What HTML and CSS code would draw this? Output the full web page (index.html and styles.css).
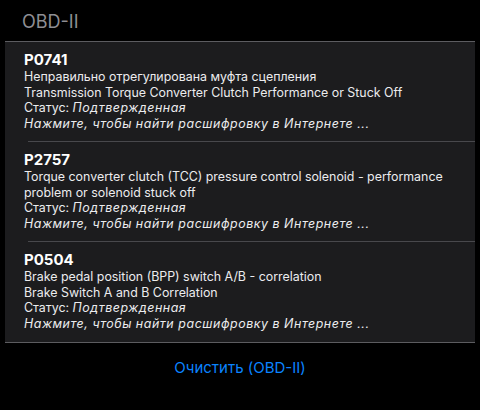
FILE: index.html
```html
<!DOCTYPE html>
<html lang="ru">
<head>
  <meta charset="UTF-8" />
  <meta name="viewport" content="width=device-width, initial-scale=1.0"/>
  <title>OBD-II</title>
  <link rel="stylesheet" href="styles.css">
</head>
<body>

  <h1 class="section-title">OBD-II</h1>

  <div class="card">
    <div class="code-row">
      <div class="code">P0741</div>
      <div class="line">Неправильно отрегулирована муфта сцепления</div>
      <div class="line">Transmission Torque Converter Clutch Performance or Stuck Off</div>
      <div class="line">Статус: <i>Подтвержденная</i></div>
      <div class="line"><i>Нажмите, чтобы найти расшифровку в Интернете ...</i></div>
    </div>

    <div class="code-row">
      <div class="code">P2757</div>
      <div class="line">Torque converter clutch (TCC) pressure control solenoid - performance problem or solenoid stuck off</div>
      <div class="line">Статус: <i>Подтвержденная</i></div>
      <div class="line"><i>Нажмите, чтобы найти расшифровку в Интернете ...</i></div>
    </div>

    <div class="code-row">
      <div class="code">P0504</div>
      <div class="line">Brake pedal position (BPP) switch A/B - correlation</div>
      <div class="line">Brake Switch A and B Correlation</div>
      <div class="line">Статус: <i>Подтвержденная</i></div>
      <div class="line"><i>Нажмите, чтобы найти расшифровку в Интернете ...</i></div>
    </div>
  </div>

  <a class="clear-btn" href="#">Очистить (OBD-II)</a>

</body>
</html>
```

FILE: styles.css
```css
* {
  box-sizing: border-box;
}

body {
  margin: 0;
  background-color: #000;
  color: #ececee;
  font-family: Inter, "Noto Sans", sans-serif;
  width: 480px;
  height: 410px;
}

.section-title {
  margin: 0;
  padding: 11px 0 0 22px;
  height: 41px;
  font-size: 18px;
  font-weight: 400;
  color: #8e8e93;
}

.card {
  margin: 0 5px;
  background-color: #1c1c1e;
  border-top: 1px solid #5c5c60;
  border-bottom: 1px solid #5c5c60;
}

.code-row {
  height: 100px;
  margin-left: 23px;
  padding: 8px 0 0 0;
  border-bottom: 1px solid #48484c;
}

.code-row:last-child {
  border-bottom: none;
}

.code {
  margin-left: -4px;
  font-size: 15px;
  font-weight: 700;
  line-height: 19px;
  color: #fff;
}

.line {
  margin-left: -4px;
  font-size: 12.4px;
  line-height: 15.5px;
}

.line i {
  letter-spacing: 0.55px;
}

.clear-btn {
  display: block;
  margin-top: 15px;
  text-align: center;
  font-size: 15px;
  color: #0a84ff;
  text-decoration: none;
}
```
